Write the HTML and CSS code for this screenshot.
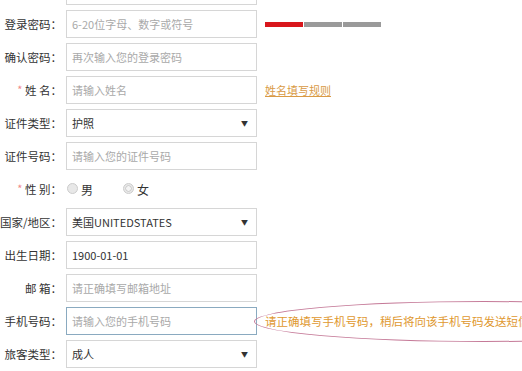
FILE: index.html
```html
<!DOCTYPE html>
<html lang="zh-CN">
<head>
    <meta charset="UTF-8">
    <meta name="viewport" content="width=device-width, initial-scale=1.0">
    <title>乘客信息</title>
    <link rel="stylesheet" href="styles.css">
</head>
<body>
    <div class="form">
        <div class="row">
            <label class="lbl"></label>
            <input class="box" type="text">
        </div>
        <div class="row">
            <label class="lbl">登录密码：</label>
            <input class="box" type="password" placeholder="6-20位字母、数字或符号">
            <div class="strength">
                <span class="bar on"></span><span class="bar"></span><span class="bar"></span>
            </div>
        </div>
        <div class="row">
            <label class="lbl">确认密码：</label>
            <input class="box" type="password" placeholder="再次输入您的登录密码">
        </div>
        <div class="row">
            <label class="lbl"><span class="req">*</span> 姓 名：</label>
            <input class="box" type="text" placeholder="请输入姓名">
            <a class="rule" href="#">姓名填写规则</a>
        </div>
        <div class="row">
            <label class="lbl">证件类型：</label>
            <div class="box select"><span>护照</span><span class="arrow">▼</span></div>
        </div>
        <div class="row">
            <label class="lbl">证件号码：</label>
            <input class="box" type="text" placeholder="请输入您的证件号码">
        </div>
        <div class="row">
            <label class="lbl"><span class="req">*</span> 性 别：</label>
            <div class="sex">
                <label class="opt"><input type="radio" name="sex" class="radio">男</label>
                <label class="opt"><input type="radio" name="sex" class="radio dot">女</label>
            </div>
        </div>
        <div class="row">
            <label class="lbl">国家/地区：</label>
            <div class="box select"><span>美国UNITEDSTATES</span><span class="arrow">▼</span></div>
        </div>
        <div class="row">
            <label class="lbl">出生日期：</label>
            <input class="box" type="text" value="1900-01-01">
        </div>
        <div class="row">
            <label class="lbl">邮 箱：</label>
            <input class="box" type="text" placeholder="请正确填写邮箱地址">
        </div>
        <div class="row">
            <label class="lbl">手机号码：</label>
            <input class="box focus" type="text" placeholder="请输入您的手机号码">
            <div class="tip">请正确填写手机号码，稍后将向该手机号码发送短信</div>
        </div>
        <div class="row">
            <label class="lbl">旅客类型：</label>
            <div class="box select"><span>成人</span><span class="arrow">▼</span></div>
        </div>
    </div>
</body>
</html>
```

FILE: styles.css
```css
html {
    overflow: hidden;
}
body {
    margin: 0;
    background-color: #fff;
    font-family: "Noto Sans CJK SC", "Liberation Sans", sans-serif;
    font-size: 11px;
    color: #333;
}
.form {
    margin-top: -23px;
}
.row {
    display: flex;
    align-items: center;
    height: 28px;
    margin-bottom: 5px;
}
.lbl {
    width: 62px;
    margin-right: 4px;
    flex: none;
    text-align: right;
    white-space: nowrap;
    font-size: 11.5px;
    color: #333;
}
.req {
    color: #f08a8a;
    font-size: 11px;
    position: relative;
    top: -1px;
}
.box {
    box-sizing: border-box;
    width: 191px;
    height: 28px;
    flex: none;
    border: 1px solid #d6d6d6;
    background-color: #fff;
    padding: 0 5px;
    font-family: inherit;
    font-size: 11px;
    color: #333;
    outline: none;
}
.box::placeholder {
    color: #a9a9a9;
}
.box.focus {
    border-color: #8aaac0;
}
.select {
    display: flex;
    align-items: center;
    justify-content: space-between;
    padding-right: 8px;
}
.arrow {
    font-size: 7px;
    color: #333;
}
.strength {
    display: flex;
    gap: 1px;
    margin-left: 8px;
}
.bar {
    width: 38px;
    height: 5px;
    background-color: #9a9a9a;
}
.bar.on {
    background-color: #d8161c;
}
.rule {
    margin-left: 8px;
    color: #d99a45;
    font-size: 11px;
    text-decoration: underline;
}
.sex {
    display: flex;
    align-items: center;
    gap: 30px;
    margin-left: 1px;
    font-size: 12px;
    color: #333;
}
.opt {
    display: flex;
    align-items: center;
    gap: 3px;
}
.radio {
    appearance: none;
    width: 11px;
    height: 11px;
    margin: 0;
    border: 1px solid #cccccc;
    border-radius: 50%;
    background-color: #e8e8e8;
    position: relative;
    top: -1px;
}
.radio.dot {
    background: radial-gradient(circle, #f4f4f4 0 2px, #d0d0d0 2.5px 3px, #e8e8e8 3.5px);
}
.tip {
    flex: none;
    box-sizing: border-box;
    width: 460px;
    height: 41px;
    margin-left: -3px;
    padding-left: 10px;
    border: 1px solid #c57a98;
    border-radius: 50%;
    display: flex;
    align-items: center;
    white-space: nowrap;
    color: #e0982f;
    font-size: 11.5px;
}
```
